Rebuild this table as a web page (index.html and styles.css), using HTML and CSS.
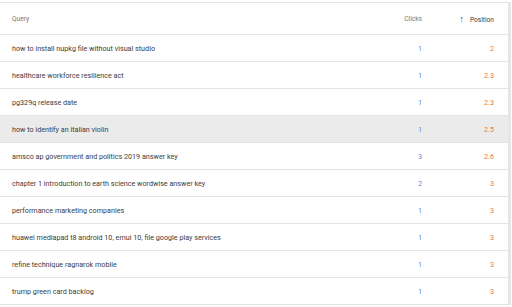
FILE: index.html
```html
<!DOCTYPE html>
<html lang="en">
<head>
    <meta charset="UTF-8">
    <title>Queries</title>
    <link rel="stylesheet" href="styles.css">
</head>
<body>
    <div class="card">
        <div class="row head">
            <span class="query">Query</span>
            <span class="clicks">Clicks</span>
            <span class="pos"><span class="arrow">&#8593;</span>Position</span>
        </div>
        <div class="row"><span class="query">how to install nupkg file without visual studio</span><span class="clicks">1</span><span class="pos">2</span></div>
        <div class="row"><span class="query">healthcare workforce resilience act</span><span class="clicks">1</span><span class="pos">2.3</span></div>
        <div class="row"><span class="query">pg329q release date</span><span class="clicks">1</span><span class="pos">2.3</span></div>
        <div class="row hover"><span class="query">how to identify an italian violin</span><span class="clicks">1</span><span class="pos">2.5</span></div>
        <div class="row"><span class="query">amsco ap government and politics 2019 answer key</span><span class="clicks">3</span><span class="pos">2.6</span></div>
        <div class="row"><span class="query">chapter 1 introduction to earth science wordwise answer key</span><span class="clicks">2</span><span class="pos">3</span></div>
        <div class="row"><span class="query">performance marketing companies</span><span class="clicks">1</span><span class="pos">3</span></div>
        <div class="row"><span class="query">huawei mediapad t8 android 10, emui 10, file google play services</span><span class="clicks">1</span><span class="pos">3</span></div>
        <div class="row"><span class="query">refine technique ragnarok mobile</span><span class="clicks">1</span><span class="pos">3</span></div>
        <div class="row"><span class="query">trump green card backlog</span><span class="clicks">1</span><span class="pos">3</span></div>
    </div>
</body>
</html>
```

FILE: styles.css
```css
* { margin: 0; padding: 0; box-sizing: border-box; }
body {
    font-family: Roboto, 'Liberation Sans', sans-serif;
    background: #fff;
    color: #3c3c3c;
    overflow: hidden;
    height: 307px;
}
.card {
    width: 511px;
    margin-top: 2px;
    border-right: 3px solid #e6e6e6;
    border-top: 1px solid #e4e4e4;
}
.row {
    display: grid;
    grid-template-columns: 1fr 60px 72px;
    align-items: center;
    height: 27px;
    padding: 0 14px 0 12px;
    border-bottom: 1px solid #e4e4e4;
    font-size: 7.2px;
}
.head {
    height: 32px;
    color: #777;
    font-size: 6.6px;
}
.head .pos { color: #3c3c3c; }
.hover { background: #ebebeb; }
.query {
    white-space: nowrap;
    color: #3c3c3c;
}
.head .query { color: #777; }
.clicks {
    text-align: right;
    color: #5b93e0;
}
.head .clicks { color: #777; }
.pos {
    text-align: right;
    color: #ec7a45;
}
.arrow {
    font-size: 9px;
    margin-right: 6px;
}
```
